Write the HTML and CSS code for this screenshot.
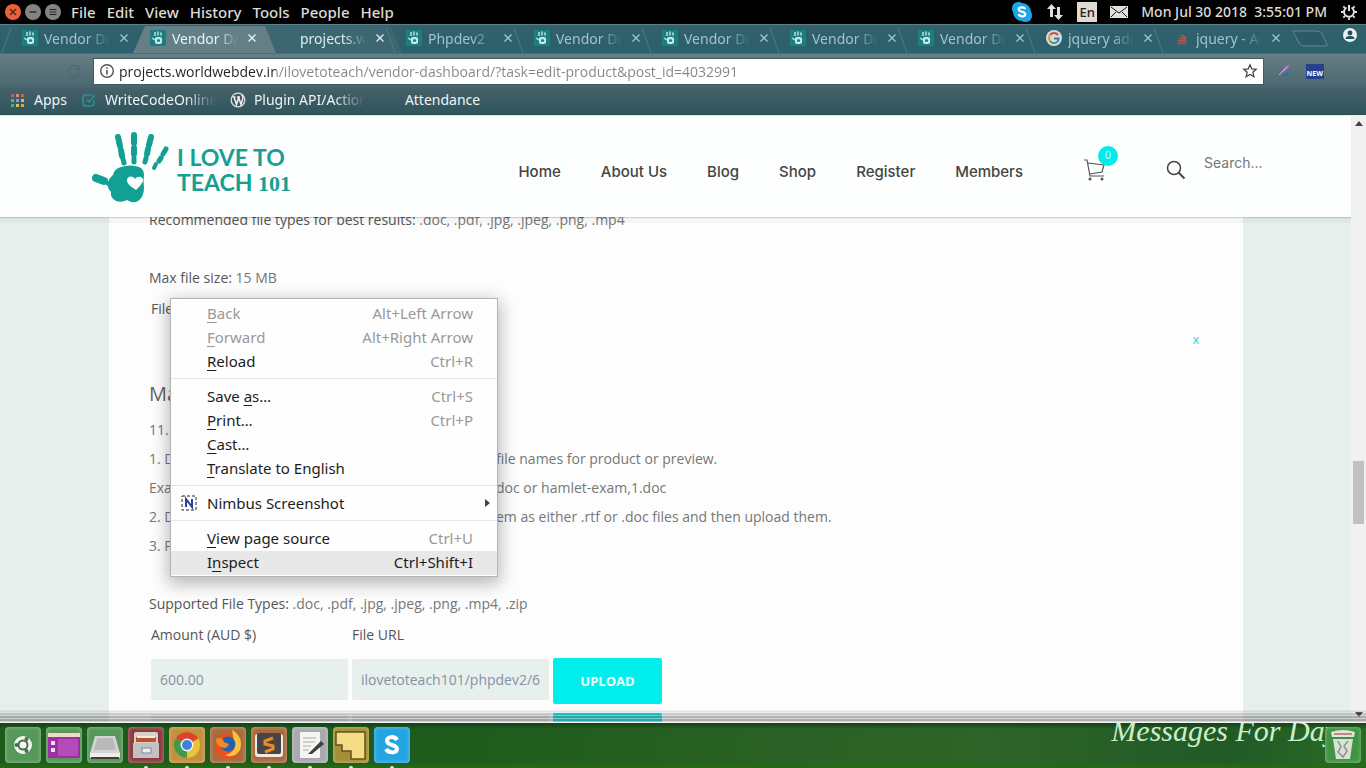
FILE: index.html
```html
<!DOCTYPE html>
<html lang="en">
<head>
<meta charset="utf-8">
<title>Vendor Dashboard - I Love To Teach 101</title>
<link rel="stylesheet" href="styles.css">
</head>
<body>
<svg class="defs" width="0" height="0" aria-hidden="true">
  <symbol id="fav" viewBox="0 0 16 16">
    <rect width="16" height="16" fill="#1d7d80"/>
    <path d="M5 2v4M8 1.500v4M11 2.500v3M2 8l3 2" stroke="#b9e6e2" stroke-width="1.500" fill="none"/>
    <rect x="5" y="7" width="7" height="7" rx="2" fill="#c6ecea"/>
    <circle cx="8.500" cy="10.500" r="1.600" fill="#1d7d80"/>
  </symbol>
  <symbol id="close" viewBox="0 0 10 10">
    <path d="M1.500 1.500l7 7M8.500 1.500l-7 7" stroke="currentColor" stroke-width="1.400"/>
  </symbol>
</svg>

<header class="sysbar">
  <div class="winctl">
    <button class="dot dot-close" aria-label="Close"><svg viewBox="0 0 16 16"><path d="M5 5l6 6M11 5l-6 6" stroke="#5a2a1a" stroke-width="1.600"/></svg></button>
    <button class="dot" aria-label="Minimise"><svg viewBox="0 0 16 16"><path d="M4.500 8h7" stroke="#333" stroke-width="1.600"/></svg></button>
    <button class="dot" aria-label="Restore"><svg viewBox="0 0 16 16"><path d="M4.500 5.500h7M4.500 8h7M4.500 10.500h7" stroke="#222" stroke-width="1.200"/></svg></button>
  </div>
  <nav class="appmenu">
    <button>File</button><button>Edit</button><button>View</button><button>History</button><button>Tools</button><button>People</button><button>Help</button>
  </nav>
  <div class="indicators">
    <svg width="22" height="22" viewBox="0 0 22 22"><rect x="1" y="1" width="13" height="13" rx="6" fill="#1aa7ea"/><rect x="8" y="8" width="13" height="13" rx="6" fill="#1aa7ea"/><circle cx="11" cy="11" r="9" fill="#1aa7ea"/><path d="M14.500 8C13 5.500 7.500 6 7.700 8.500 8 11.500 14.300 10 14.300 13.300 14.200 16 8.500 16 7.500 13.200" stroke="#fff" stroke-width="2.200" fill="none"/></svg>
    <svg width="18" height="18" viewBox="0 0 18 18"><path d="M5.500 1L1 6h3v8h3V6h3zM12.500 17L8 12h3V4h3v8h3z" fill="#e4e0da"/></svg>
    <span class="lang">En</span>
    <svg width="18" height="12" viewBox="0 0 18 12"><rect width="18" height="12" fill="#e4e0da"/><path d="M1 1l8 6 8-6M1 11l5-5M17 11l-5-5" stroke="#111" fill="none"/></svg>
    <span class="clock">Mon Jul 30 2018&nbsp; 3:55:01 PM</span>
    <svg width="18" height="18" viewBox="0 0 18 18"><path d="M6.500 4.500a5 5 0 1 0 5 0M9 2v6" stroke="#e4e0da" stroke-width="2" fill="none"/><path d="M1 9h2.500M14.500 9H17M3.300 3.300l1.600 1.600M14.700 3.300l-1.600 1.600M3.300 14.700l1.600-1.600M14.700 14.700l-1.600-1.600M9 14.500V17" stroke="#e4e0da" stroke-width="1.800"/></svg>
  </div>
</header>

<section class="chrome">
  <div class="tabstrip">
    <div class="tab"><svg class="ico"><use href="#fav"/></svg><span class="title">Vendor Dashboard</span><button class="x" aria-label="Close tab"><svg><use href="#close"/></svg></button></div>
    <div class="tab active"><svg class="ico"><use href="#fav"/></svg><span class="title">Vendor Dashboard</span><button class="x" aria-label="Close tab"><svg><use href="#close"/></svg></button></div>
    <div class="tab lit"><span class="ico"></span><span class="title">projects.worldwebdev</span><button class="x" aria-label="Close tab"><svg><use href="#close"/></svg></button></div>
    <div class="tab"><svg class="ico"><use href="#fav"/></svg><span class="title">Phpdev2</span><button class="x" aria-label="Close tab"><svg><use href="#close"/></svg></button></div>
    <div class="tab"><svg class="ico"><use href="#fav"/></svg><span class="title">Vendor Dashboard</span><button class="x" aria-label="Close tab"><svg><use href="#close"/></svg></button></div>
    <div class="tab"><svg class="ico"><use href="#fav"/></svg><span class="title">Vendor Dashboard</span><button class="x" aria-label="Close tab"><svg><use href="#close"/></svg></button></div>
    <div class="tab"><svg class="ico"><use href="#fav"/></svg><span class="title">Vendor Dashboard</span><button class="x" aria-label="Close tab"><svg><use href="#close"/></svg></button></div>
    <div class="tab"><svg class="ico"><use href="#fav"/></svg><span class="title">Vendor Dashboard</span><button class="x" aria-label="Close tab"><svg><use href="#close"/></svg></button></div>
    <div class="tab"><svg class="ico" viewBox="0 0 16 16"><circle cx="8" cy="8" r="8" fill="#d5dcdf"/><path d="M12 5A5 5 0 0 0 4 5" stroke="#d4483b" stroke-width="2" fill="none"/><path d="M4 5a5 5 0 0 0 0 6" stroke="#caa63a" stroke-width="2" fill="none"/><path d="M4 11a5 5 0 0 0 7 1" stroke="#3a9a55" stroke-width="2" fill="none"/><path d="M8 8.500h4.500Q12.500 11 11 12" stroke="#4272c4" stroke-width="2" fill="none"/></svg><span class="title">jquery add class</span><button class="x" aria-label="Close tab"><svg><use href="#close"/></svg></button></div>
    <div class="tab"><svg class="ico" viewBox="0 0 16 16"><path d="M4 13h8M4 10.500h8M5 8l7 1M7 5l5 3" stroke="#b0574f" stroke-width="1.500"/><path d="M3 9v6h10V9" stroke="#4e5f66" fill="none"/></svg><span class="title">jquery - Add class</span><button class="x" aria-label="Close tab"><svg><use href="#close"/></svg></button></div>
    <button class="newtab" aria-label="New tab"><svg width="38" height="18" viewBox="0 0 38 18"><path d="M1 1h24q4 0 5 3l5 10q1 2-2 2H12q-3 0-5-3z" fill="#2c5a66" stroke="#5d8a94"/></svg></button>
    <button class="avatar" aria-label="Profile"><svg width="16" height="16" viewBox="0 0 16 16"><circle cx="8" cy="8" r="7" fill="#e9f1f2"/><circle cx="8" cy="6" r="2.400" fill="#1f4f5a"/><path d="M3.500 12q0-3 4.500-3t4.500 3z" fill="#1f4f5a"/></svg></button>
  </div>
  <div class="toolbar">
    <button class="reload" aria-label="Reload"><svg width="16" height="16" viewBox="0 0 16 16"><path d="M13 5.500A5.500 5.500 0 1 0 13.500 9M13.500 2v4h-4" stroke="#526b70" stroke-width="1.800" fill="none"/></svg></button>
    <div class="omnibox">
      <svg width="16" height="16" viewBox="0 0 16 16"><circle cx="8" cy="8" r="6.300" fill="none" stroke="#555" stroke-width="1.400"/><path d="M8 7v4.500M8 4.200v1.600" stroke="#555" stroke-width="1.600"/></svg>
      <input class="url" aria-label="Address" value="projects.worldwebdev.in/ilovetoteach/vendor-dashboard/?task=edit-product&amp;post_id=4032991">
      <svg width="16" height="16" viewBox="0 0 16 16"><path d="M8 1.800l1.800 4.100 4.400.4-3.300 3 1 4.400L8 11.400l-3.900 2.300 1-4.400-3.300-3 4.400-.4z" fill="none" stroke="#444" stroke-width="1.300"/></svg>
    </div>
    <svg class="ext" width="16" height="16" viewBox="0 0 16 16"><path d="M2 13L9 4q3-3 5-2-1 3-4 5z" fill="#a56fb4"/><path d="M3 12l8-8" stroke="#d7a9dc"/><path d="M7 13q4-1 6-4" stroke="#2e6f96" stroke-width="2" fill="none"/></svg>
    <span class="new">NEW</span>
  </div>
  <nav class="bookmarks">
    <a href="#" class="bm"><svg width="16" height="16" viewBox="0 0 16 16"><g><rect x="1" y="2" width="3" height="3" fill="#d8574b"/><rect x="6" y="2" width="3" height="3" fill="#dd8b7d"/><rect x="11" y="2" width="3" height="3" fill="#e05c3c"/><rect x="1" y="7" width="3" height="3" fill="#5bb08a"/><rect x="6" y="7" width="3" height="3" fill="#6aa4e0"/><rect x="11" y="7" width="3" height="3" fill="#e6b64f"/><rect x="1" y="12" width="3" height="3" fill="#57a87c"/><rect x="6" y="12" width="3" height="3" fill="#d6c25a"/><rect x="11" y="12" width="3" height="3" fill="#e8a53c"/></g></svg><span>Apps</span></a>
    <a href="#" class="bm"><svg width="16" height="16" viewBox="0 0 16 16"><path d="M11 3H5Q2 3 2 6v5q0 3 3 3h5q3 0 3-3V8M6 8l2 2 6-7" stroke="#2d9097" stroke-width="1.600" fill="none"/></svg><span class="fade">WriteCodeOnline</span></a>
    <a href="#" class="bm"><svg width="16" height="16" viewBox="0 0 16 16"><circle cx="8" cy="8" r="7.500" fill="#dfe3e4"/><circle cx="8" cy="8" r="6.200" fill="#45565c"/><path d="M2.500 5h3M4 5l2.500 7.500L8.500 6M7 5h3M8.500 5l2.500 7.500L13 6q0-2-1.500-3" stroke="#eef1f1" stroke-width="1.500" fill="none"/></svg><span class="fade">Plugin API/Action</span></a>
    <a href="#" class="bm noico"><span>Attendance</span></a>
  </nav>
</section>

<div class="viewport">
  <div class="site">
    <header class="sitehead">
      <a href="#" class="logo">
        <svg width="78" height="74" viewBox="0 0 78 74" fill="none">
          <path d="M29 37q9-3 18 0 5 2 5 8-1 6 0 13 0 9-6 13-5 3-11-1-5 3-11 1-6-3-5-9-4-4-3-9 1-5 5-8 1-6 8-8z" fill="#11a093"/>
          <g stroke="#11a093" stroke-linecap="round"><path d="M26 7l2 9" stroke-width="6"/><path d="M29 20l1 6" stroke-width="6"/><path d="M31 29l1 4" stroke-width="5"/><path d="M42 5v8M42 18v6" stroke-width="6"/><path d="M42 28v4" stroke-width="5"/><path d="M59 7l-2 8M56 19l-1 5" stroke-width="6"/><path d="M54 28l-1 4" stroke-width="5"/><path d="M74 19l-3 5M69 28l-2 3" stroke-width="5"/><path d="M64 34l-2 4" stroke-width="4"/><path d="M4 48q5 2 8 3" stroke-width="8"/><path d="M14 52l7 6" stroke-width="4"/></g>
          <path d="M44 60c-6-4-9-6-9-10 0-4 6-5 8-1 3-4 9-2 8 2-1 3-4 6-7 9z" fill="#fff"/>
        </svg>
        <span class="brand"><span>I LOVE TO</span><span>TEACH <b>101</b></span></span>
      </a>
      <nav class="mainnav">
        <a href="#">Home</a><a href="#">About Us</a><a href="#">Blog</a><a href="#">Shop</a><a href="#">Register</a><a href="#">Members</a>
      </nav>
      <a href="#" class="cart" aria-label="Cart"><svg width="22" height="22" viewBox="0 0 22 22"><path d="M0 1h3l3 16h14M4 4l16 2-2 7-12 2" stroke="#555" stroke-width="1.200" fill="none"/><circle cx="6" cy="20" r="1.500" fill="#555"/><circle cx="18" cy="20" r="1.500" fill="#555"/></svg><span class="count">0</span></a>
      <form class="search">
        <button type="button" aria-label="Search"><svg width="20" height="20" viewBox="0 0 20 20"><circle cx="8" cy="8" r="6.500" stroke="#444" stroke-width="1.500" fill="none"/><path d="M12.500 12.500l6 6" stroke="#444" stroke-width="2"/></svg></button>
        <input type="search" placeholder="Search..." aria-label="Search">
      </form>
    </header>
    <main class="card">
      <p><b>Recommended file types for best results:</b> .doc, .pdf, .jpg, .jpeg, .png, .mp4</p>
      <p class="spaced"><b>Max file size:</b> 15 MB</p>
      <div class="filehead"><b>File</b></div>
      <div class="remove"><button aria-label="Remove">x</button></div>
      <h3>Main</h3>
      <p>11.</p>
      <p class="split"><span class="lead">1. Do</span><span>file names for product or preview.</span></p>
      <p class="split"><span class="lead">Example</span><span>doc or hamlet-exam,1.doc</span></p>
      <p class="split"><span class="lead">2. Do</span><span>em as either .rtf or .doc files and then upload them.</span></p>
      <p>3. P</p>
      <p class="spaced"><b>Supported File Types:</b> .doc, .pdf, .jpg, .jpeg, .png, .mp4, .zip</p>
      <table class="files">
        <thead><tr><th scope="col">Amount (AUD $)</th><th scope="col">File URL</th><th></th></tr></thead>
        <tbody>
          <tr><td><input aria-label="Amount" value="600.00"></td><td><input aria-label="File URL" value="ilovetoteach101/phpdev2/600"></td><td><button>UPLOAD</button></td></tr>
          <tr><td><input aria-label="Amount"></td><td><input aria-label="File URL"></td><td><button aria-label="Upload"></button></td></tr>
        </tbody>
      </table>
    </main>
  </div>
  <div class="scroll">
    <svg width="8" height="5" viewBox="0 0 8 5"><path d="M0 5l4-5 4 5z" fill="#444"/></svg>
    <span class="thumb"></span>
    <svg width="8" height="5" viewBox="0 0 8 5"><path d="M0 0l4 5 4-5z" fill="#333"/></svg>
  </div>
  <div class="edge"></div>
</div>

<footer class="dock">
  <button aria-label="Dash" class="app g-green"><svg viewBox="0 0 36 36"><circle cx="18" cy="18" r="9" fill="#f2f5f0"/><circle cx="18" cy="18" r="4.500" fill="none" stroke="#4a6b4a" stroke-width="2"/><circle cx="11.500" cy="18" r="2" fill="#4a6b4a"/><circle cx="21.500" cy="12" r="2" fill="#4a6b4a"/><circle cx="21.500" cy="24" r="2" fill="#4a6b4a"/></svg></button>
  <button aria-label="Workspaces" class="app g-green"><svg viewBox="0 0 36 36"><path d="M2 7h32v24H2z" fill="#9b2fa6"/><path d="M2 6h32v4H2z" fill="#f0dcc4"/><path d="M12 12h20v17H12z" fill="#b34cb8"/><rect x="5" y="14" width="4" height="4" fill="#f3d9f4"/><rect x="5" y="21" width="4" height="4" fill="#f3d9f4"/></svg></button>
  <button aria-label="Drive" class="app g-green"><svg viewBox="0 0 36 36"><path d="M8 9h20l5 17H3z" fill="#d4d5d3"/><path d="M10 11h16l3 12H7z" fill="#b9bbb9"/><path d="M3 26h30v5H3z" fill="#eee"/><path d="M4 31h28" stroke="#4d3b31" stroke-width="2"/></svg></button>
  <button aria-label="Files" class="app g-red run"><svg viewBox="0 0 36 36"><rect x="6" y="5" width="24" height="26" rx="2" fill="#d9d0c8"/><path d="M8 10h20v5H8z" fill="#b8532f"/><path d="M9 9h18v2H9z" fill="#f4ebe4"/><path d="M5 16h26v15H5z" fill="#c3c2c0"/><rect x="14" y="21" width="9" height="5" fill="#eee" stroke="#6c88a7"/></svg></button>
  <button aria-label="Chrome" class="app g-orange run"><svg viewBox="0 0 36 36"><circle cx="18" cy="18" r="13" fill="#e9c235"/><path d="M18 18L6.700 11.500A13 13 0 0 1 29.300 11.500z" fill="#d8452f"/><path d="M18 18L6.700 11.500A13 13 0 0 0 18 31z" fill="#3f9b4b"/><circle cx="18" cy="18" r="6.500" fill="#f4f4f4"/><circle cx="18" cy="18" r="5" fill="#3e7fe0"/></svg></button>
  <button aria-label="Firefox" class="app g-brown run"><svg viewBox="0 0 36 36"><circle cx="18" cy="19" r="13" fill="#e8501f"/><path d="M22 3q12 7 8 20-6 9-15 5 12-3 9-13z" fill="#f8c43b"/><circle cx="18" cy="17" r="7.500" fill="#2660b4"/><path d="M6 12q6-3 8 3l5 2q-2 6-8 3-5-2-5-8z" fill="#f08a24"/></svg></button>
  <button aria-label="Sublime Text" class="app g-brown run"><svg viewBox="0 0 36 36"><rect x="4" y="7" width="28" height="23" rx="3" fill="#efebe4"/><rect x="6" y="6" width="24" height="21" rx="2" fill="#484644"/><path d="M22 11l-8 3v3l8 2v3l-8 3" stroke="#ee8b25" stroke-width="3" fill="none"/></svg></button>
  <button aria-label="Text editor" class="app g-grey run"><svg viewBox="0 0 36 36"><rect x="8" y="5" width="20" height="26" rx="1" fill="#f5f5f3"/><path d="M11 11h13M11 15h12M11 19h8M11 23h6" stroke="#aaa"/><path d="M16 27l13-13 3 3-12 10z" fill="#40403e"/></svg></button>
  <button aria-label="Notes" class="app g-olive run"><svg viewBox="0 0 36 36"><path d="M3 5h29v27H18v-8H9v-6H3z" fill="#f5dd85" stroke="#60531d" stroke-width="1.500"/></svg></button>
  <button aria-label="Skype" class="app g-blue run"><svg viewBox="0 0 36 36"><path d="M23 13C21 9 13 9 13 14c0 5 10 3 10 8 0 5-9 4-11 0" stroke="#fff" stroke-width="4" fill="none"/></svg></button>
  <span class="wall">Messages For Day</span>
  <button aria-label="Trash" class="app g-bin"><svg viewBox="0 0 36 36"><path d="M6 5q12-4 24 0l-1 5H7z" fill="#dfe6dc"/><path d="M9 7h18" stroke="#b36d5b" stroke-width="1.500"/><path d="M8 12h20l-3 20H11z" fill="#d9e0d6"/><path d="M13 14l3 6-3 5 5 5 4-6-3-5 4-5" stroke="#8b968a" stroke-width="1.500" fill="none"/></svg></button>
</footer>

<div class="menu" role="menu">
  <button role="menuitem" disabled><span><u>B</u>ack</span><kbd>Alt+Left Arrow</kbd></button>
  <button role="menuitem" disabled><span><u>F</u>orward</span><kbd>Alt+Right Arrow</kbd></button>
  <button role="menuitem"><span><u>R</u>eload</span><kbd>Ctrl+R</kbd></button>
  <hr>
  <button role="menuitem"><span>Save <u>a</u>s…</span><kbd>Ctrl+S</kbd></button>
  <button role="menuitem"><span><u>P</u>rint…</span><kbd>Ctrl+P</kbd></button>
  <button role="menuitem"><span><u>C</u>ast…</span></button>
  <button role="menuitem"><span><u>T</u>ranslate to English</span></button>
  <hr>
  <button role="menuitem" class="sub"><svg width="16" height="16" viewBox="0 0 16 16"><rect x="1" y="1" width="14" height="14" fill="none" stroke="#222" stroke-dasharray="3 2"/><path d="M5 12V4l6 8V4" stroke="#2b3f9c" stroke-width="2" fill="none"/></svg><span>Nimbus Screenshot</span><svg class="arrow" width="5" height="8" viewBox="0 0 5 8"><path d="M0 0l5 4-5 4z" fill="#444"/></svg></button>
  <hr>
  <button role="menuitem"><span><u>V</u>iew page source</span><kbd>Ctrl+U</kbd></button>
  <button role="menuitem" class="hover"><span>I<u>n</u>spect</span><kbd>Ctrl+Shift+I</kbd></button>
</div>
</body>
</html>
```
FILE: styles.css
```css
* { box-sizing: border-box; }
body {
  margin: 0;
  height: 100vh;
  display: flex;
  flex-direction: column;
  overflow: hidden;
  position: relative;
  font-family: "Noto Sans", "Open Sans", sans-serif;
  font-size: 14px;
}
button, input { font: inherit; color: inherit; border: 0; padding: 0; margin: 0; background: none; }
a { color: inherit; text-decoration: none; }
svg { display: block; flex: none; }
.defs { position: absolute; }

/* System bar */
.sysbar { height: 24px; flex: none; display: flex; align-items: center; background: #000; color: #dfdbd2; font-weight: 500; padding: 0 8px 1px 5px; }
.winctl { display: flex; gap: 4px; width: 66px; }
.dot { width: 16px; height: 16px; border-radius: 50%; background: #85837f; }
.dot-close { background: #ec6139; }
.appmenu { display: flex; gap: 11px; font-size: 15px; }
.indicators { margin-left: auto; display: flex; align-items: center; gap: 13px; }
.lang { background: #dfdbd2; color: #222; width: 20px; height: 20px; line-height: 20px; text-align: center; font-size: 13px; }

/* Browser frame */
.chrome { flex: none; background: linear-gradient(#31616c, #2b606d 28px, #667e86 29px, #4c6971 60px, #456069 64px, #2f555c); border-top: 1px solid #5d8189; border-bottom: 1px solid #2b4a4f; }
.tabstrip { height: 28px; display: flex; padding: 0 8px; }
.tab { position: relative; flex: 0 1 128px; min-width: 0; display: flex; align-items: center; gap: 6px; padding: 0 10px 2px 14px; color: #a3c2c9; }
.tab::before { content: ""; position: absolute; inset: 3px 0 0 -2px; border-left: 1px solid #4d7a85; transform: skewX(20deg); }
.tab:first-child::before { transform: skewX(-20deg); }
.tab > * { position: relative; z-index: 2; }
.tab.active { z-index: 1; color: #e4f4f4; }
.tab.active::before { inset: 1px -12px 0 -3px; border: 0; transform: none; background: #657f87; clip-path: polygon(12px 0, calc(100% - 11px) 0, 100% 100%, 0 100%); }
.tab.lit { color: #d9ecf0; }
.tab.lit::before { inset: 1px -10px 0 -6px; border: 0; transform: none; background: #3c6670; clip-path: polygon(0 0, calc(100% - 11px) 0, 100% 100%, 10px 100%); }
.ico { width: 16px; height: 16px; flex: none; }
.title { flex: 1; min-width: 0; overflow: hidden; white-space: nowrap; mask-image: linear-gradient(to right, #000 44px, transparent 66px); }
.x, .x svg { width: 10px; height: 10px; }
.x { margin-right: -3px; }
.newtab { margin-left: 4px; }
.avatar { margin-left: auto; align-self: flex-start; margin-top: 2px; }
.toolbar { height: 34px; display: flex; align-items: center; padding: 2px 42px 0 66px; gap: 12px; }
.reload { margin-right: -1px; }
.omnibox { flex: 1; height: 27px; display: flex; align-items: center; background: #fff; border: 1px solid #3f5c63; padding: 0 5px; gap: 4px; }
.url { flex: 1; min-width: 0; outline: 0; font-family: "Open Sans", sans-serif; color: transparent; background: linear-gradient(to right, #222 157px, #858585 157px); background-clip: text; }
.new { background: #27418c; color: #fff; font-size: 7px; font-weight: 700; line-height: 9px; padding: 5px 1px 1px; margin-left: 2px; }
.bookmarks { height: 27px; display: flex; align-items: center; color: #edf5f5; padding: 0 0 2px 10px; gap: 14px; }
.bm { display: flex; align-items: center; gap: 8px; white-space: nowrap; }
.fade { width: 111px; overflow: hidden; mask-image: linear-gradient(to right, #000 80px, transparent); }
.noico { margin-left: 26px; }

/* Web page */
.viewport { flex: 1; min-height: 0; display: flex; position: relative; overflow: hidden; background: #e7efec; }
.site { flex: 1; min-width: 0; color: #777; font-family: "Open Sans", sans-serif; }
.sitehead { height: 102px; position: relative; z-index: 1; display: flex; align-items: center; background: #fdfefe; border-top: 1px solid #d5f2f0; box-shadow: 0 6px 0 rgba(0, 0, 0, .03), 0 1px 1px rgba(0, 0, 0, .15); padding: 0 73px 0 92px; }
.logo { display: flex; gap: 7px; }
.brand { display: flex; flex-direction: column; justify-content: center; padding-top: 6px; font: 700 23px/25px Lato, sans-serif; color: #16a094; }
.brand b { font: 700 22px/20px "Liberation Serif", serif; }
.mainnav { margin-left: auto; padding-top: 10px; display: flex; gap: 40px; font: 500 15px/20px Inter, sans-serif; color: #444; }
.cart { position: relative; margin-left: 61px; padding-top: 6px; }
.count { position: absolute; left: 14px; top: -7px; width: 20px; height: 20px; border-radius: 50%; background: #00ecea; color: #c9ffff; font: 10px/19px Inter, sans-serif; text-align: center; }
.search { display: flex; align-items: center; margin-left: 60px; }
.search button { padding-top: 6px; }
.search input { width: 74px; margin: -8px 0 0 18px; font: 14px/20px Inter, sans-serif; }
.search input::placeholder { color: #777; opacity: 1; }
.card { margin: -12px 108px 0 109px; padding: 0 40px; background: #fdfdfd; line-height: 29px; min-height: 560px; }
.card p { margin: 0; white-space: nowrap; }
.card .spaced { margin-top: 29px; }
.card b, .card th { font-weight: 500; color: #555; }
.filehead { padding: 2px; height: 31px; }
.remove { display: flex; justify-content: flex-end; padding-right: 3px; height: 33px; }
.remove button { color: #00dfe0; width: 8px; line-height: 29px; font-size: 12px; }
.card h3 { margin: 23px 0 7px; font-size: 20px; line-height: 29px; font-weight: 500; color: #666; }
.split { display: flex; }
.lead { width: 347px; }
.files { border-spacing: 4px 0; margin-left: -2px; border-collapse: separate; }
.files th { text-align: left; padding: 2px 0 9px; line-height: 29px; }
.files td { vertical-align: top; height: 55px; padding: 0; }
.files td, .files th { font-size: 14px; }
.files input { display: block; width: 197px; height: 41px; margin-top: 1px; padding: 0 9px; background: #e8f0ee; color: #8391a3; border-radius: 2px; }
.files button { width: 109px; height: 46px; background: #00eeec; color: #effcfc; font-weight: 700; font-size: 13px; border-radius: 2px; }
.scroll { width: 15px; flex: none; display: flex; flex-direction: column; align-items: center; background: #f1f1f1; padding: 6px 0; }
.thumb { width: 11px; height: 63px; background: #c1c1c1; margin: 335px 0 auto; }
.edge { position: absolute; inset: auto 0 0 0; height: 13px; z-index: 2; background: repeating-linear-gradient(rgba(80, 80, 80, .45) 0 2px, rgba(190, 190, 190, .6) 2px 3px); mask-image: linear-gradient(rgba(0, 0, 0, .1), #000 7px); border-bottom: 1px solid #f3f3f3; }

/* Dock */
.dock { height: 45px; flex: none; display: flex; align-items: center; gap: 5px; padding: 0 5px 2px; overflow: hidden; background: linear-gradient(#173f17, rgba(30, 90, 30, 0) 6px, rgba(30, 90, 30, 0) 38px, #246a12), linear-gradient(to right, #1d5c1c, #1d5c1c 32%, #2c6126 60%, #2e6428 72%, #215a27 90%, #2a6b24); }
.app { position: relative; width: 36px; height: 36px; flex: none; border-radius: 4px; box-shadow: inset 0 0 4px rgba(255, 255, 255, .4); }
.app svg { width: 36px; height: 36px; }
.run::after { content: ""; position: absolute; left: 16px; bottom: -6px; width: 4px; height: 3px; border-radius: 2px 2px 0 0; background: #e9f5e6; }
.g-green { background: #56985a; }
.g-red { background: #8c3b40; }
.g-orange { background: #c3903c; }
.g-brown { background: #a96a3e; }
.g-grey { background: #a9a9b0; }
.g-olive { background: #a48f36; }
.g-blue { background: #22a5e0; }
.g-bin { background: #3f9443; }
.wall { margin: -28px -18px 0 auto; font: italic 400 30px/24px "Liberation Serif", serif; color: #cdeecb; white-space: nowrap; }

/* Context menu */
.menu { position: absolute; left: 170px; top: 298px; z-index: 5; width: 328px; display: flex; flex-direction: column; padding: 3px 0 1px; background: #fefefe; border: 1px solid #b4b4b4; box-shadow: 0 5px 16px 2px rgba(0, 0, 0, .28); color: #1c1c1c; font-size: 15px; }
.menu button { height: 24px; display: flex; align-items: center; justify-content: space-between; padding: 0 24px 2px 36px; }
.menu button:disabled { color: #999; }
.menu u { text-underline-offset: 3px; }
.menu kbd { font: inherit; color: #999; }
.menu hr { width: 100%; margin: 4px 0 6px; border: 0; border-top: 1px solid #e6e6e6; }
.menu .hover { background: #e8e8e8; }
.menu .hover kbd { color: inherit; }
.menu .sub { padding: 0 7px 2px 10px; gap: 10px; }
.arrow { margin-left: auto; }
```
